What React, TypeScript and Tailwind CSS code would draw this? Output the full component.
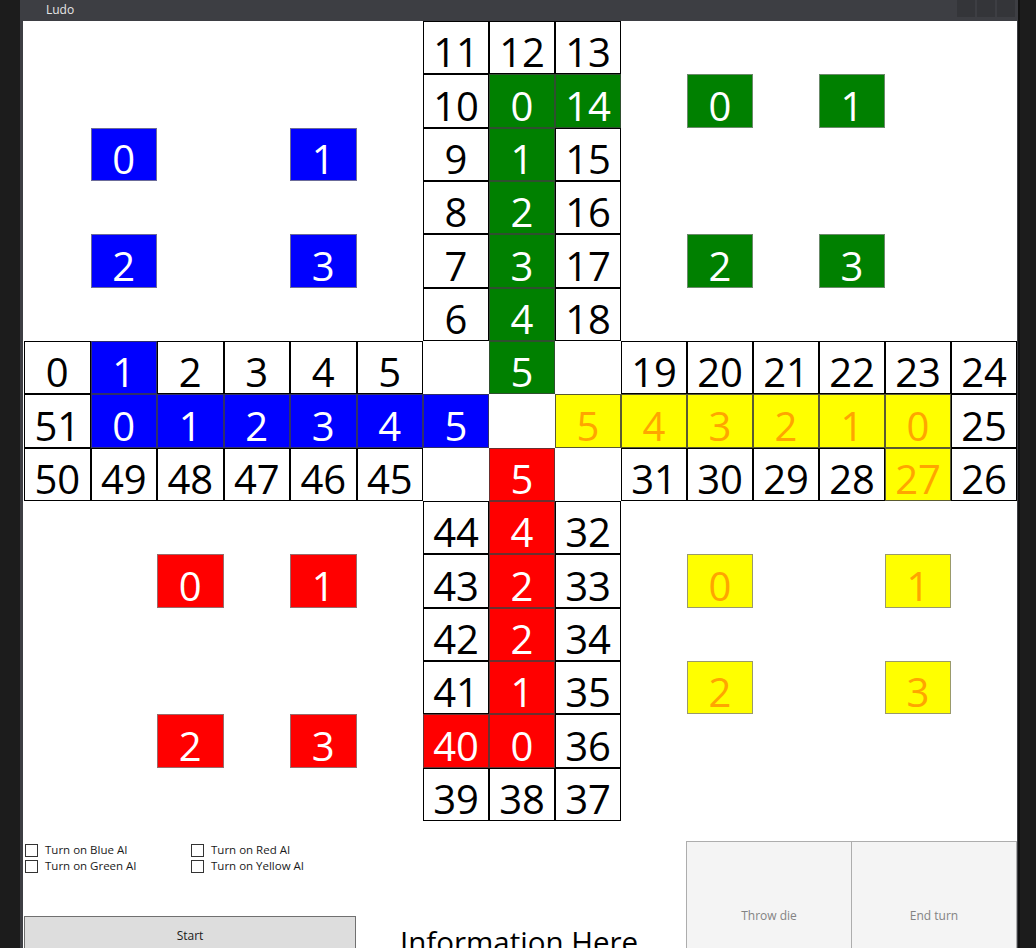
type Kind = "w" | "b" | "g" | "r" | "y" | "B" | "G" | "R" | "Y"
type Cell = { t: string; k: Kind }

const cells: Record<string, Cell> = {}
const put = (r: number, c: number, t: string | number, k: Kind) => {
  cells[`${r},${c}`] = { t: String(t), k }
}

// top arm
;[11, 10, 9, 8, 7, 6].forEach((n, i) => put(i, 6, n, "w"))
put(0, 7, 12, "w")
;[0, 1, 2, 3, 4, 5].forEach((n, i) => put(i + 1, 7, n, "g"))
put(0, 8, 13, "w")
put(1, 8, 14, "g")
;[15, 16, 17, 18].forEach((n, i) => put(i + 2, 8, n, "w"))

// left arm
put(6, 0, 0, "w")
put(6, 1, 1, "b")
;[2, 3, 4, 5].forEach((n, i) => put(6, i + 2, n, "w"))
put(7, 0, 51, "w")
;[0, 1, 2, 3, 4, 5].forEach((n, i) => put(7, i + 1, n, "b"))
;[50, 49, 48, 47, 46, 45].forEach((n, i) => put(8, i, n, "w"))

// right arm
;[19, 20, 21, 22, 23, 24].forEach((n, i) => put(6, i + 9, n, "w"))
;[5, 4, 3, 2, 1, 0].forEach((n, i) => put(7, i + 8, n, "y"))
put(7, 14, 25, "w")
;[31, 30, 29, 28].forEach((n, i) => put(8, i + 9, n, "w"))
put(8, 13, 27, "y")
put(8, 14, 26, "w")

// bottom arm
put(8, 7, 5, "r")
;[44, 43, 42, 41].forEach((n, i) => put(i + 9, 6, n, "w"))
put(13, 6, 40, "r")
put(14, 6, 39, "w")
;[4, 2, 2, 1, 0].forEach((n, i) => put(i + 9, 7, n, "r"))
put(14, 7, 38, "w")
;[32, 33, 34, 35, 36, 37].forEach((n, i) => put(i + 9, 8, n, "w"))

// home pieces
put(2, 1, 0, "B"); put(2, 4, 1, "B"); put(4, 1, 2, "B"); put(4, 4, 3, "B")
put(1, 10, 0, "G"); put(1, 12, 1, "G"); put(4, 10, 2, "G"); put(4, 12, 3, "G")
put(10, 2, 0, "R"); put(10, 4, 1, "R"); put(13, 2, 2, "R"); put(13, 4, 3, "R")
put(10, 10, 0, "Y"); put(10, 13, 1, "Y"); put(12, 10, 2, "Y"); put(12, 13, 3, "Y")

const look: Record<Kind, string> = {
  w: "bg-white text-black border-black",
  b: "bg-[#0000ff] text-white border-[#30306a]",
  g: "bg-[#008000] text-white border-[#2f4f2f]",
  r: "bg-[#ff0000] text-white border-[#6a3030]",
  y: "bg-[#ffff00] text-[#ffa500] border-[#5a5a30]",
  B: "bg-[#0000ff] text-white border-[#6b6b9a]",
  G: "bg-[#008000] text-white border-[#6b8a6b]",
  R: "bg-[#ff0000] text-white border-[#9a6b6b]",
  Y: "bg-[#ffff00] text-[#ffa500] border-[#9a9a6b]",
}

function Square({ cell }: { cell?: Cell }) {
  if (!cell) return <div />
  return (
    <div className={`flex items-end justify-center border ${look[cell.k]}`}>
      <span className="pb-[1px] text-[40px] leading-none">{cell.t}</span>
    </div>
  )
}

function Check({ label }: { label: string }) {
  return (
    <label className="flex items-center gap-[7px] h-4 text-[11.5px] text-[#1a1a1a]">
      <span className="w-[13px] h-[13px] border border-[#333] bg-white" />
      {label}
    </label>
  )
}

export default function App() {
  const board = []
  for (let r = 0; r < 15; r++)
    for (let c = 0; c < 15; c++) board.push(<Square key={`${r}-${c}`} cell={cells[`${r},${c}`]} />)

  return (
    <div className="w-[1036px] h-[948px] overflow-hidden bg-[#1c1c1c] font-['Open_Sans',sans-serif]">
      <div className="ml-[20px] w-[1000px] h-full flex flex-col bg-[#3d3e43] border-r-2 border-[#111]">
        {/* title bar */}
        <div className="h-[21px] flex items-start shrink-0">
          <span className="ml-[26px] mt-[2px] text-[12px] leading-4 text-[#e6e6e6]">Ludo</span>
          <div className="ml-auto mr-[3px] flex gap-[2px]">
            <div className="w-[18px] h-[17px] bg-[#343539]" />
            <div className="w-[18px] h-[17px] bg-[#343539]" />
            <div className="w-[18px] h-[17px] bg-[#343539]" />
          </div>
        </div>

        <div className="ml-[3px] w-[994px] flex-1 bg-white overflow-hidden">
          <div className="ml-[1px] w-[993px] h-[800px] grid grid-cols-[repeat(6,66.5px)_repeat(9,66px)] grid-rows-15">
            {board}
          </div>

          {/* controls */}
          <div className="flex h-[200px]">
            <div className="ml-[2px] w-[331px] flex flex-col">
              <div className="mt-[21px] grid grid-cols-[166px_1fr]">
                <Check label="Turn on Blue AI" />
                <Check label="Turn on Red AI" />
                <Check label="Turn on Green AI" />
                <Check label="Turn on Yellow AI" />
              </div>
              <button className="mt-[42px] -ml-[1px] h-[40px] border border-[#707070] bg-[#dddddd] text-[12px] text-[#1a1a1a]">
                Start
              </button>
            </div>
            <div className="ml-[44px] w-[286px] pt-[106px]">
              <span className="text-[29.5px] leading-none text-black whitespace-nowrap">Information Here</span>
            </div>
            <div className="mt-[20px] flex">
              <button className="w-[166px] h-[150px] border border-[#adadad] bg-[#f4f4f4] text-[12px] text-[#838383]">
                Throw die
              </button>
              <button className="w-[165px] h-[150px] border border-l-0 border-[#adadad] bg-[#f4f4f4] text-[12px] text-[#838383]">
                End turn
              </button>
            </div>
          </div>
        </div>
      </div>
    </div>
  )
}
